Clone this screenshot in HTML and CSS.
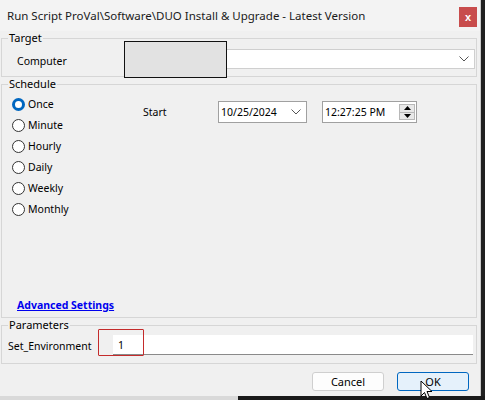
FILE: index.html
```html
<!DOCTYPE html>
<html>
<head>
<meta charset="utf-8">
<link rel="stylesheet" href="styles.css">
</head>
<body>
<div class="screen">
  <div class="window">
    <div class="titlebar">
      <span class="title">Run Script ProVal\Software\DUO Install &amp; Upgrade - Latest Version</span>
      <span class="close">x</span>
    </div>

    <fieldset class="group target">
      <legend>Target</legend>
      <div class="row target-row">
        <span class="label computer">Computer</span>
        <div class="combo">
          <svg class="chev" width="10" height="6" viewBox="0 0 10 6"><path d="M0.5 0.5 L5 5 L9.5 0.5" fill="none" stroke="#555" stroke-width="1"/></svg>
        </div>
      </div>
      <div class="redact"></div>
    </fieldset>

    <fieldset class="group schedule">
      <legend>Schedule</legend>
      <div class="sched-inner">
        <div class="sched-body">
          <div class="radios">
            <label class="radio"><span class="dot on"></span>Once</label>
            <label class="radio"><span class="dot"></span>Minute</label>
            <label class="radio"><span class="dot"></span>Hourly</label>
            <label class="radio"><span class="dot"></span>Daily</label>
            <label class="radio"><span class="dot"></span>Weekly</label>
            <label class="radio"><span class="dot"></span>Monthly</label>
          </div>
          <span class="start">Start</span>
          <div class="date">
            <span>10/25/2024</span>
            <svg class="chev2" width="10" height="6" viewBox="0 0 10 6"><path d="M0.5 0.5 L5 5 L9.5 0.5" fill="none" stroke="#555" stroke-width="1"/></svg>
          </div>
          <div class="time">
            <span>12:27:25 PM</span>
            <div class="spin">
              <div class="spin-half"><svg width="7" height="4" viewBox="0 0 7 4"><path d="M0 4 L3.5 0 L7 4 Z" fill="#000"/></svg></div>
              <div class="spin-half"><svg width="7" height="4" viewBox="0 0 7 4"><path d="M0 0 L3.5 4 L7 0 Z" fill="#000"/></svg></div>
            </div>
          </div>
        </div>
        <a class="advanced" href="#">Advanced Settings</a>
      </div>
    </fieldset>

    <fieldset class="group params">
      <legend>Parameters</legend>
      <div class="row param-row">
        <span class="label">Set_Environment</span>
        <div class="param-input"><span class="val">1</span></div>
        <div class="highlight"></div>
      </div>
    </fieldset>

    <div class="buttons">
      <button class="btn">Cancel</button>
      <button class="btn ok">OK</button>
      <svg class="cursor" width="14" height="20" viewBox="0 0 14 20"><path d="M1 1 L1 16 L4.5 12.5 L7 18.5 L9.5 17.5 L7 11.5 L12 11.5 Z" fill="#fff" stroke="#000" stroke-width="1" stroke-linejoin="round"/></svg>
    </div>
  </div>
  <div class="bottom-strip"><div class="bs-light"></div><div class="bs-dark"></div></div>
</div>
</body>
</html>
```

FILE: styles.css
```css
* { box-sizing: border-box; }
html, body { margin: 0; padding: 0; }
body {
  background: #202020;
  font-family: "Noto Sans", "Open Sans", sans-serif;
  font-size: 10.5px;
  color: #000;
  width: 485px;
  height: 400px;
  overflow: hidden;
}
.screen { width: 485px; height: 400px; display: flex; flex-direction: column; }
.window {
  width: 481px;
  height: 396px;
  background: #f0f0f0;
  display: flex;
  flex-direction: column;
  position: relative;
  border-right: 1px solid #c8c8c8;
}
.bottom-strip { display: flex; height: 4px; }
.bs-light { width: 238px; background: #d9d9d9; }
.bs-dark { flex: 1; background: #1a1a1a; }

.titlebar {
  height: 31px;
  flex-shrink: 0;
  display: flex;
  align-items: center;
  padding-left: 7px;
  background: #f3f3f3;
}
.title { font-size: 11.5px; color: #1a1a1a; }
.close {
  margin-left: auto;
  margin-right: 3px;
  width: 18px;
  height: 20px;
  margin-top: 2px;
  background: #c84c4c;
  color: #fff;
  font-weight: bold;
  font-size: 11px;
  display: flex;
  align-items: center;
  justify-content: center;
  font-family: "Liberation Sans", sans-serif;
}

.group {
  margin: 0 3px 0 1px;
  padding: 0;
  border: 1px solid #d6d6d6;
  min-width: 0;
  position: relative;
  flex-shrink: 0;
}
.group legend {
  padding: 0 1px;
  margin-left: 6px;
  font-size: 11px;
  line-height: 14px;
}
.target { height: 46px; }
.target-row {
  display: flex;
  align-items: center;
  padding: 4px 1px 0 15px;
}
.computer { width: 208px; flex-shrink: 0; padding-top: 4px; }
.combo {
  flex: 1;
  height: 20px;
  background: #fff;
  border: 1px solid #cfcfcf;
  display: flex;
  align-items: center;
  justify-content: flex-end;
  padding-right: 5px;
}
.redact {
  position: absolute;
  left: 122px;
  top: -4px;
  width: 103px;
  height: 37px;
  border: 1px solid #111;
  background: #e2e2e2;
}

.schedule {
  margin-top: 0;
  height: 241px;
}
.sched-inner {
  height: 226px;
  display: flex;
  flex-direction: column;
}
.sched-body {
  display: flex;
  align-items: flex-start;
  padding: 5px 0 0 10px;
}
.radios { display: flex; flex-direction: column; gap: 5px; width: 131px; flex-shrink: 0; }
.radio { display: flex; align-items: center; height: 16px; }
.dot {
  width: 13px;
  height: 13px;
  border-radius: 50%;
  border: 1px solid #333;
  background: #fff;
  margin-right: 3px;
  flex-shrink: 0;
}
.dot.on {
  border: 3.5px solid #0067c0;
  background: #fff;
}
.start { margin-top: 9px; width: 75px; flex-shrink: 0; }
.date {
  margin-top: 5px;
  width: 89px;
  height: 22px;
  background: #fff;
  border: 1px solid #a0a0a0;
  display: flex;
  align-items: center;
  padding-left: 2px;
  padding-right: 5px;
  justify-content: space-between;
  flex-shrink: 0;
}
.time {
  margin-top: 5px;
  margin-left: 15px;
  width: 95px;
  height: 22px;
  background: #fff;
  border: 1px solid #a0a0a0;
  display: flex;
  align-items: center;
  padding-left: 2px;
  padding-right: 1px;
  justify-content: space-between;
  flex-shrink: 0;
}
.spin {
  width: 16px;
  height: 16px;
  display: flex;
  flex-direction: column;
  border: 1px solid #b8b8b8;
  background: #e8e8e8;
}
.spin-half {
  flex: 1;
  display: flex;
  align-items: center;
  justify-content: center;
}
.spin-half + .spin-half { border-top: 1px solid #b8b8b8; }
.advanced {
  margin-top: auto;
  margin-left: 15px;
  margin-bottom: 5px;
  color: #0000ee;
  font-weight: bold;
  text-decoration: underline;
  font-size: 10.5px;
  align-self: flex-start;
}

.params {
  margin-top: 0;
  height: 46px;
}
.param-row {
  display: flex;
  align-items: center;
  padding: 3px 3px 0 6px;
  position: relative;
}
.param-row .label { width: 105px; flex-shrink: 0; padding-top: 2px; }
.param-input {
  flex: 1;
  height: 20px;
  background: #fff;
  border-bottom: 1px solid #8a8a8a;
  display: flex;
  align-items: center;
  padding-left: 5px;
}
.highlight {
  position: absolute;
  left: 96px;
  top: -3px;
  width: 46px;
  height: 27px;
  border: 1px solid #c42b2b;
  border-radius: 1px;
}

.buttons {
  display: flex;
  justify-content: flex-end;
  gap: 13px;
  padding: 8px 11px 0 0;
  position: relative;
}
.btn {
  width: 72px;
  height: 19px;
  border: 1px solid #cfcfcf;
  border-radius: 3px;
  background: #fdfdfd;
  font-family: "Noto Sans", "Open Sans", sans-serif;
  font-size: 11px;
  padding: 0;
  color: #000;
}
.btn.ok {
  border: 1px solid #0067c0;
  background: #e5f1fb;
}
.cursor {
  position: absolute;
  left: 420px;
  top: 16px;
}
```
